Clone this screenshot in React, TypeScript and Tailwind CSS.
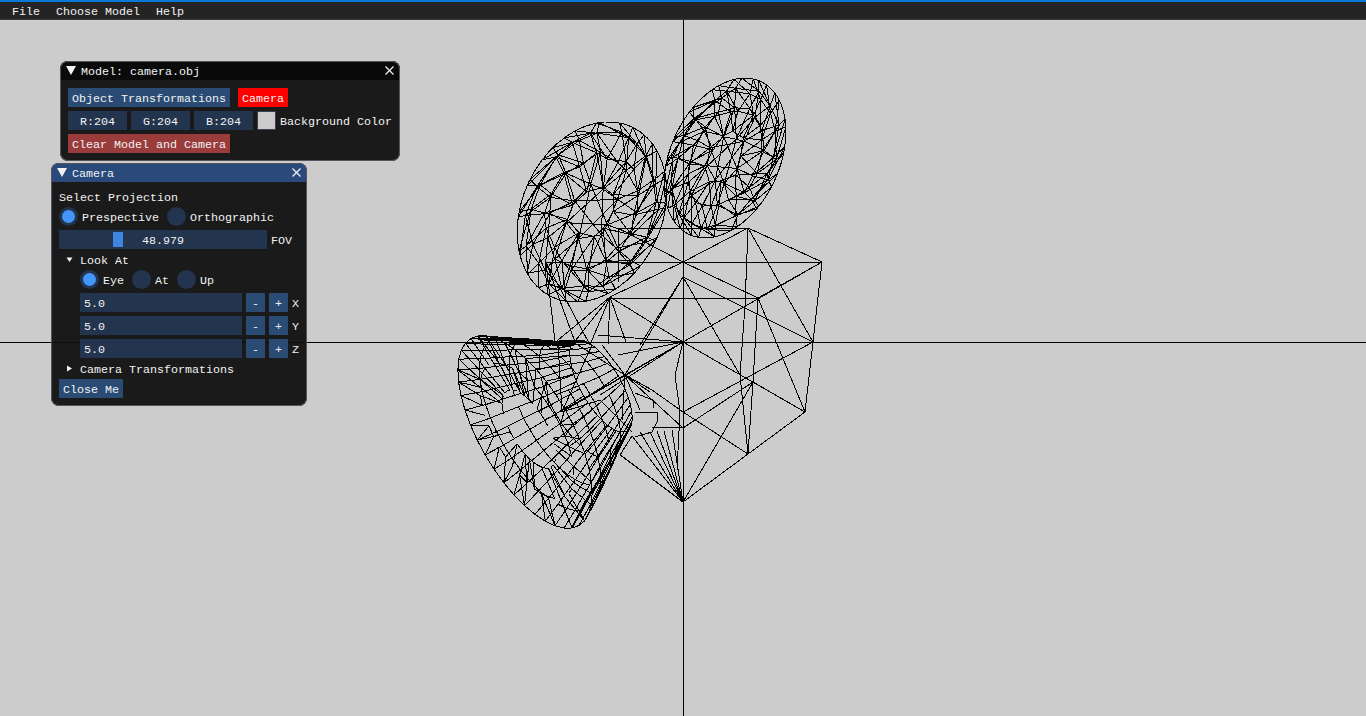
import React from "react";

type P = [number, number];

const fontClass = "font-['Liberation_Mono',monospace] text-[11.67px] leading-[13px] text-[#f2f2f2] whitespace-pre pt-[4px]";
const btnClass = "flex h-[19px] items-center justify-center bg-[#2a4c74]";
const frameClass = "flex h-[19px] items-center bg-[#22344e]";

// small seeded random so the mesh is the same every run
const makeRng = (seed: number) => () => {
    seed = (seed * 16807) % 2147483647;
    return seed / 2147483647;
};

const seg = (a: P, b: P) => `M${a[0].toFixed(1)} ${a[1].toFixed(1)}L${b[0].toFixed(1)} ${b[1].toFixed(1)}`;

const ellipsePoint = (cx: number, cy: number, a: number, b: number, tilt: number, u: number, v: number): P => {
    const t = (tilt * Math.PI) / 180;
    const along = a * v;
    const across = b * u;
    return [cx + across * Math.cos(t) + along * Math.sin(t), cy + across * Math.sin(t) - along * Math.cos(t)];
};

// lens-cap ellipsoid: rim, then two jittered triangulated shells seen through each other
const ellipsoid = (cx: number, cy: number, a: number, b: number, tilt: number, seed: number) => {
    const rng = makeRng(seed);
    let d = "";
    const rimCount = 48;
    const rim: P[] = [];
    for (let i = 0; i < rimCount; i++) {
        const th = (i / rimCount) * Math.PI * 2;
        rim.push(ellipsePoint(cx, cy, a, b, tilt, Math.cos(th), Math.sin(th)));
    }
    rim.forEach((p, i) => (d += seg(p, rim[(i + 1) % rimCount])));
    for (let shell = 0; shell < 2; shell++) {
        const rings = [0.3, 0.62, 0.86, 1];
        const count = shell === 0 ? 8 : 9;
        const off = shell * 0.35;
        const grid: P[][] = rings.map((r, k) => {
            const n = count * (k === 0 ? 1 : 2);
            const row: P[] = [];
            for (let i = 0; i < n; i++) {
                const th = off + ((i + (rng() - 0.5) * 0.5) / n) * Math.PI * 2;
                const rr = k === rings.length - 1 ? 1 : r + (rng() - 0.5) * 0.1;
                row.push(ellipsePoint(cx, cy, a, b, tilt, rr * Math.cos(th), rr * Math.sin(th)));
            }
            return row;
        });
        grid.forEach((row, k) => {
            row.forEach((p, i) => {
                if (k < grid.length - 1) d += seg(p, row[(i + 1) % row.length]);
                if (k < grid.length - 1) {
                    const next = grid[k + 1];
                    const j = Math.round((i / row.length) * next.length) % next.length;
                    d += seg(p, next[j]);
                    d += seg(p, next[(j + 1) % next.length]);
                    if (next.length > row.length) d += seg(p, next[(j - 1 + next.length) % next.length]);
                }
            });
        });
        if (shell === 0) grid[0].forEach((p, i) => (d += seg(p, grid[0][(i + 3) % grid[0].length])));
    }
    return d;
};

// front lens: big tilted rim joined to a small rear ring, with a meshed cap
const lens = () => {
    const rng = makeRng(77);
    let d = "";
    const n = 40;
    const ring = (cx: number, cy: number, a: number, b: number): P[] => {
        const out: P[] = [];
        for (let i = 0; i < n; i++) {
            const th = (i / n) * Math.PI * 2;
            out.push(ellipsePoint(cx, cy, a, b, 150, Math.cos(th), Math.sin(th)));
        }
        return out;
    };
    const rings = [
        ring(525, 432, 108, 46),
        ring(540, 424, 97, 42),
        ring(560, 412, 82, 35),
        ring(580, 400, 66, 28),
        ring(601, 386, 52, 20),
    ];
    rings.forEach((r, k) => {
        r.forEach((p, i) => {
            if (k === 0 || k === 4 || rng() < 0.8) d += seg(p, r[(i + 1) % n]);
            if (k < rings.length - 1) {
                d += seg(p, rings[k + 1][i]);
            }
        });
    });
    // cap mesh on the rim
    const cap = [ring(527, 431, 76, 32), ring(529, 429, 44, 18)];
    cap.forEach((r, k) => {
        const outer = k === 0 ? rings[0] : cap[0];
        r.forEach((p, i) => {
            if (rng() < 0.7) d += seg(p, outer[i]);
            if (rng() < 0.4) d += seg(p, outer[(i + 1) % n]);
            if (rng() < 0.6) d += seg(p, r[(i + 1) % n]);
        });
    });
    // heavy fans along the top and lower edges of the barrel
    for (let i = 0; i < 9; i++) {
        d += seg([478 + i * 3, 338 + (i % 3)], [578 - i, 342 + i * 0.6]);
        d += seg([572 + i * 1.5, 527 - i * 3], [622 + i, 440 - i * 1.5]);
    }
    return d;
};

const bodyLines: [number, number, number, number][] = [
    [748, 228, 822, 262], [822, 262, 813, 342], [813, 342, 805, 412], [805, 412, 748, 454],
    [748, 454, 683, 502], [683, 502, 620, 455], [618, 228, 748, 228], [546, 262, 822, 262],
    [618, 228, 683, 262], [683, 262, 610, 297], [748, 228, 683, 262], [748, 228, 745, 306],
    [745, 306, 740, 375], [740, 375, 748, 454], [753, 382, 748, 454], [753, 382, 758, 298],
    [683, 342, 822, 262], [683, 342, 805, 412], [813, 342, 683, 412], [813, 342, 683, 277],
    [683, 412, 748, 454], [683, 428, 753, 382], [683, 502, 753, 382], [805, 412, 758, 298],
    [805, 412, 753, 382], [740, 375, 683, 277], [748, 228, 813, 342], [610, 298, 758, 298],
    [683, 262, 758, 298], [758, 298, 822, 262], [683, 277, 625, 375], [683, 277, 640, 345],
    [683, 342, 625, 375], [683, 342, 562, 412], [683, 342, 610, 297], [683, 342, 598, 335],
    [683, 342, 618, 355], [683, 342, 600, 395], [683, 342, 675, 375], [675, 375, 680, 412],
    [680, 412, 677, 470], [683, 428, 625, 375], [683, 428, 652, 427], [683, 412, 652, 390],
    [652, 390, 625, 375], [683, 502, 650, 432], [683, 502, 657, 431], [683, 502, 664, 431],
    [683, 502, 672, 430], [683, 502, 640, 432], [683, 502, 632, 436], [683, 502, 622, 456],
    [620, 455, 632, 436], [546, 262, 555, 342], [555, 342, 560, 350], [618, 228, 618, 282],
    [625, 375, 562, 412], [625, 375, 578, 345], [625, 375, 640, 410], [635, 412, 657, 412],
    [657, 412, 657, 422], [657, 422, 652, 432], [652, 432, 635, 437], [635, 393, 653, 400],
    [653, 400, 653, 408], [610, 297, 626, 342], [610, 297, 552, 345],
    [610, 297, 572, 345], [610, 297, 590, 345], [610, 297, 608, 345], [546, 262, 590, 345],
    [546, 262, 575, 342], [562, 412, 558, 342], [562, 412, 592, 345], [562, 412, 600, 400],
    [600, 400, 632, 432], [625, 375, 602, 345], [625, 375, 650, 392], [625, 375, 622, 420],
];

const bodyPath = bodyLines.map((l) => seg([l[0], l[1]], [l[2], l[3]])).join("");
const capA = ellipsoid(592, 212, 94, 70, 25, 1234);
const capB = ellipsoid(725, 158, 84.5, 54.5, 25, 4321);
const lensPath = lens();

const Wireframe = () => (
    <svg className="absolute left-0 top-0" width="1366" height="716" viewBox="0 0 1366 716" fill="none" stroke="#000" strokeWidth="1" shapeRendering="crispEdges">
        <path d="M683.5 0V716M0 342.5H1366" />
        <path d={bodyPath} />
        <path d={capA} />
        <path d={capB} />
        <path d={lensPath} />
    </svg>
);

const TitleBar = (props: { title: string; active?: boolean }) => (
    <div className={`flex h-[19px] items-center rounded-t-[8px] pl-[6px] pr-[6px] ${props.active ? "bg-[#294a7a]" : "bg-[#0a0a0a]"}`}>
        <svg width="10" height="9" viewBox="0 0 10 9" fill="#f2f2f2"><path d="M0 0H10L5 9Z" /></svg>
        <span className={`${fontClass} ml-[5px]`}>{props.title}</span>
        <svg className="ml-auto" width="9" height="9" viewBox="0 0 9 9" stroke="#f2f2f2" strokeWidth="1.2"><path d="M0.5 0.5L8.5 8.5M8.5 0.5L0.5 8.5" /></svg>
    </div>
);

const Radio = (props: { label: string; on?: boolean; gap: string }) => (
    <div className={`flex items-center ${props.gap}`}>
        <div className="flex h-[19px] w-[19px] items-center justify-center rounded-full bg-[#22344e]">
            {props.on && <div className="h-[13px] w-[13px] rounded-full bg-[#4296fa]" />}
        </div>
        <span className={`${fontClass} ml-[4px]`}>{props.label}</span>
    </div>
);

const Arrow = (props: { open?: boolean }) => (
    <svg className="ml-[7px] mr-[7px]" width="7" height="7" viewBox="0 0 7 7" fill="#f2f2f2">
        {props.open ? <path d="M0.5 1.5H6.5L3.5 6Z" /> : <path d="M1 0.5L6 3.5L1 6.5Z" />}
    </svg>
);

const Stepper = (props: { axis: string }) => (
    <div className="flex h-[19px] items-center">
        <div className={`${frameClass} w-[162px] pl-[4px]`}>
            <span className={fontClass}>5.0</span>
        </div>
        <div className={`${btnClass} ml-[4px] w-[19px]`}><span className={fontClass}>-</span></div>
        <div className={`${btnClass} ml-[4px] w-[19px]`}><span className={fontClass}>+</span></div>
        <span className={`${fontClass} ml-[4px]`}>{props.axis}</span>
    </div>
);

const ModelWindow = () => (
    <div className="absolute left-[60px] top-[61px] h-[100px] w-[340px] rounded-[8px] bg-[#0f0f0f]/[0.94] outline outline-1 -outline-offset-1 outline-[#55555f]">
        <TitleBar title="Model: camera.obj" />
        <div className="flex flex-col gap-[4px] px-[8px] pt-[8px]">
            <div className="flex gap-[8px]">
                <div className={`${btnClass} w-[162px]`}><span className={fontClass}>Object Transformations</span></div>
                <div className="flex h-[19px] w-[50px] items-center justify-center bg-[#ff0000]"><span className={fontClass}>Camera</span></div>
            </div>
            <div className="flex items-center gap-[4px]">
                <div className={`${frameClass} w-[59px] justify-center`}><span className={fontClass}>R:204</span></div>
                <div className={`${frameClass} w-[59px] justify-center`}><span className={fontClass}>G:204</span></div>
                <div className={`${frameClass} w-[59px] justify-center`}><span className={fontClass}>B:204</span></div>
                <div className="h-[19px] w-[19px] border border-[#3a4252] bg-[#cccccc]" />
                <span className={fontClass}>Background Color</span>
            </div>
            <div className="flex h-[19px] w-[162px] items-center justify-center bg-[#9a3c3c]">
                <span className={fontClass}>Clear Model and Camera</span>
            </div>
        </div>
    </div>
);

const CameraWindow = () => (
    <div className="absolute left-[51px] top-[163px] h-[243px] w-[256px] rounded-[8px] bg-[#0f0f0f]/[0.94] outline outline-1 -outline-offset-1 outline-[#55555f]">
        <TitleBar title="Camera" active />
        <div className="flex flex-col px-[8px] pt-[8px]">
            <div className="flex h-[13px] items-center"><span className={fontClass}>Select Projection</span></div>
            <div className="mt-[4px] flex h-[19px]">
                <Radio label="Prespective" on gap="mr-[8px]" />
                <Radio label="Orthographic" gap="" />
            </div>
            <div className="mt-[4px] flex h-[19px] items-center">
                <div className={`${frameClass} relative w-[208px] justify-center`}>
                    <div className="absolute left-[54px] top-[2px] h-[15px] w-[10px] bg-[#3d85e0]" />
                    <span className={`${fontClass} relative`}>48.979</span>
                </div>
                <span className={`${fontClass} ml-[4px]`}>FOV</span>
            </div>
            <div className="mt-[4px] flex h-[13px] items-center">
                <Arrow open />
                <span className={fontClass}>Look At</span>
            </div>
            <div className="ml-[21px] mt-[4px] flex h-[19px]">
                <Radio label="Eye" on gap="mr-[8px]" />
                <Radio label="At" gap="mr-[8px]" />
                <Radio label="Up" gap="" />
            </div>
            <div className="ml-[21px] mt-[4px] flex flex-col gap-[4px]">
                <Stepper axis="X" />
                <Stepper axis="Y" />
                <Stepper axis="Z" />
            </div>
            <div className="mt-[4px] flex h-[13px] items-center">
                <Arrow />
                <span className={fontClass}>Camera Transformations</span>
            </div>
            <div className={`${btnClass} mt-[4px] w-[64px]`}><span className={fontClass}>Close Me</span></div>
        </div>
    </div>
);

const MenuBar = () => (
    <div className="relative flex h-[20px] items-center border-t-2 border-b border-t-[#0a78d8] border-b-[#3a3a3a] bg-[#242424] pl-[12px]">
        <span className={fontClass}>File</span>
        <span className={`${fontClass} ml-[16px]`}>Choose Model</span>
        <span className={`${fontClass} ml-[16px]`}>Help</span>
    </div>
);

const App = () => {
    return (
        <div className="relative h-[716px] w-[1366px] overflow-hidden bg-[#cccccc]">
            <Wireframe />
            <MenuBar />
            <ModelWindow />
            <CameraWindow />
        </div>
    );
};

export default App;
